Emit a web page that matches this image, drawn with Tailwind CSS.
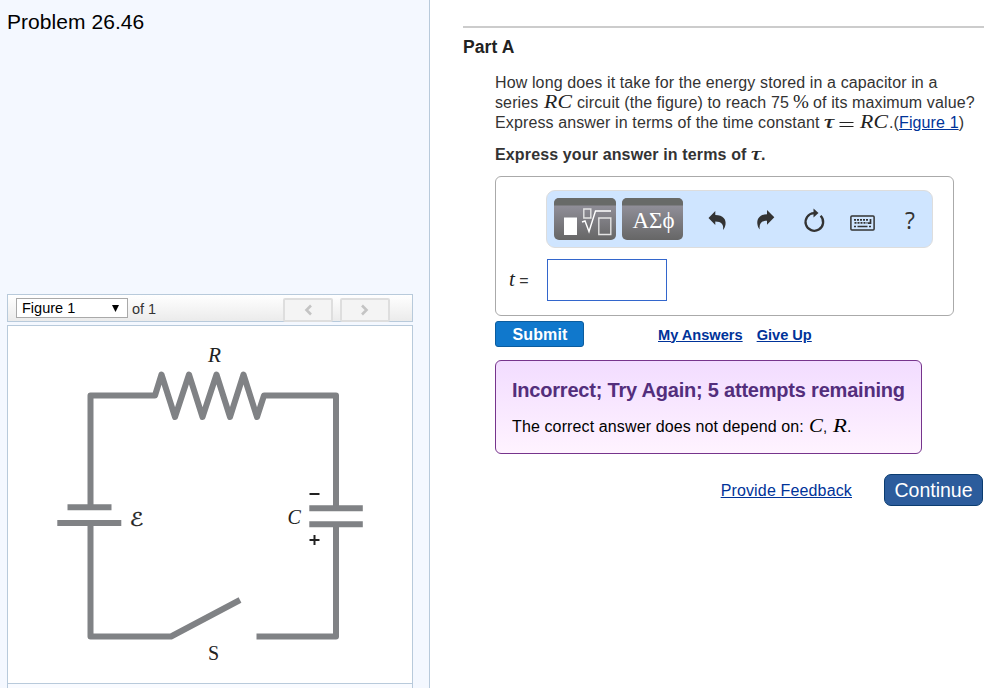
<!DOCTYPE html>
<html lang="en">
<head>
<meta charset="utf-8">
<title>Problem 26.46</title>
<script src="https://cdn.jsdelivr.net/npm/@tailwindcss/browser@4"></script>
</head>
<body class="bg-white font-['Liberation_Sans',Arial,sans-serif] text-[#333]">
<div class="flex h-[688px] w-[996px] overflow-hidden">
  <aside class="flex w-[430px] shrink-0 flex-col border-r border-[#b8cadb] bg-[#f4f8ff] pl-[7px] pr-4">
    <h1 class="h-[294px] shrink-0 pt-2 text-[21px] leading-7 tracking-[0.05px] text-black">Problem 26.46</h1>
    <div class="flex h-7 shrink-0 items-start border border-[#b8cadb] bg-linear-to-b from-white to-[#ebebeb] pl-2 pt-[3px]">
      <div class="flex h-5 w-28 items-center justify-between border border-[#a9a9a9] bg-white pl-[5px] pr-2 text-[14.5px] text-black">
        <span class="pt-0.5">Figure 1</span>
        <svg class="h-[7px] w-[7px]" viewBox="0 0 7 7"><path d="M0 0h7L3.5 7z"/></svg>
      </div>
      <span class="ml-1 text-[14.5px] leading-[23px]">of 1</span>
      <div class="ml-auto mr-[22px] flex gap-[7px]">
        <button class="flex h-6 w-[50px] items-center justify-center rounded-[2px] border-2 border-[#dedede] bg-[#f4f4f4]"><svg class="h-3 w-2" viewBox="0 0 8 12" fill="none" stroke="#c4c4c4" stroke-width="2.600"><path d="M7 1.500 2.500 6 7 10.500"/></svg></button>
        <button class="flex h-6 w-[50px] items-center justify-center rounded-[2px] border-2 border-[#dedede] bg-[#f4f4f4]"><svg class="h-3 w-2" viewBox="0 0 8 12" fill="none" stroke="#c4c4c4" stroke-width="2.600"><path d="M1 1.500 5.500 6 1 10.500"/></svg></button>
      </div>
    </div>
    <div class="mt-[3px] h-[359px] shrink-0 border border-[#b8cadb] bg-white">
      <svg class="h-[357px] w-[404px]" viewBox="8 326 404 357" fill="none" stroke="#808285" stroke-width="6">
        <path stroke-linejoin="round" d="M90.500 507V395.500H155L161.500 374.500 175 417 189 374.500 202.500 417 216.500 374.500 230 417 243.500 374.500 257 417 264 395.500H336V507"/>
        <path stroke-linejoin="round" d="M90.500 523V636.500H171L240 600M256.500 636.500H336V525"/>
        <path d="M67.500 507.200h44M57.300 523h64M309.300 508.300h53.500M309.300 524.300h53.500"/>
        <path stroke="#222" stroke-width="2" d="M309.500 494h10M309.500 540h10M314.500 535v10"/>
        <g fill="#222" stroke="none" font-family="'Liberation Serif',serif" font-size="20">
          <text x="208" y="362" font-style="italic" textLength="13" lengthAdjust="spacingAndGlyphs">R</text>
          <text x="287.500" y="524" font-style="italic">C</text>
          <text x="208" y="660">S</text>
          <text x="129.500" y="525.500" font-family="'DejaVu Sans','DejaVu Serif',serif" font-size="19" textLength="14" lengthAdjust="spacingAndGlyphs" stroke="#222" stroke-width=".3">ℰ</text>
        </g>
      </svg>
    </div>
    <div class="-mt-px h-8 shrink-0 border border-[#b8cadb] bg-[#f9fbff]"></div>
  </aside>

  <main class="w-[566px] pl-[33px] pt-[26px]">
    <section class="w-[521px] border-t-2 border-[#ccc]">
      <h2 class="pt-[9px] text-[17.500px] font-bold leading-5 tracking-[0.1px] text-[#222]">Part A</h2>
      <div class="ml-8 pt-[16px]">
        <div class="text-[16px] leading-5 tracking-[0.12px] whitespace-nowrap">
          <div class="h-5">How long does it take for the energy stored in a capacitor in a</div>
          <div class="flex h-5"><span class="w-[49px]">series</span><svg class="h-5 w-[33px] overflow-visible"><text x="0" y="15" textLength="28" lengthAdjust="spacingAndGlyphs" fill="#222" font-family="Liberation Serif" font-size="19" font-style="italic">RC</text></svg><span class="w-[216px]">circuit (the figure) to reach 75</span><svg class="h-5 w-[20px] overflow-visible"><text x="0" y="15" textLength="16" lengthAdjust="spacingAndGlyphs" fill="#222" font-family="Liberation Serif" font-size="19">%</text></svg><span>of its maximum value?</span></div>
          <div class="flex h-5"><span class="w-[329px]">Express answer in terms of the time constant</span><svg class="h-5 w-[65px] overflow-visible" fill="#222" font-family="Liberation Serif" font-size="19" font-style="italic"><text x="0" y="15" textLength="10" lengthAdjust="spacingAndGlyphs" stroke="#222" stroke-width=".2">τ</text><path d="M15.500 9.500h14M15.500 13.500h14" stroke="#222"/><text x="36" y="15" textLength="28" lengthAdjust="spacingAndGlyphs">RC</text></svg><span>.(<a class="text-[#039] underline">Figure 1</a>)</span></div>
        </div>
        <div class="mt-3 flex h-5 text-[16px] font-bold leading-5 tracking-[0.14px]"><span class="w-[256px]">Express your answer in terms of</span><svg class="h-5 w-[10px] overflow-visible"><text x="0" y="15" textLength="10" lengthAdjust="spacingAndGlyphs" fill="#222" stroke="#222" stroke-width=".2" font-family="Liberation Serif" font-size="19" font-style="italic" font-weight="400">τ</text></svg><span>.</span></div>

        <div class="mt-[11px] h-[140px] w-[459px] rounded-[6px] border border-[#aaa] pl-[50px] pt-[13px]">
          <div class="flex h-[58px] w-[387px] items-start rounded-[9px] border border-[#ddd] bg-[#cfe5ff] pl-[7px] pt-[7px]">
            <svg class="h-[42px] w-[62px] shrink-0 rounded-[5px] bg-linear-to-b from-[#9a98a4] to-[#666]" viewBox="0 0 62 42" fill="none" stroke="#fff" stroke-width="1.400"><path fill="#686a68" stroke="none" d="M0 0h62v7.500H0z"/><path fill="#fff" stroke="none" d="M10 19.500h13v17.500H10z"/><path stroke="#e4e4e4" d="M29.800 11h7v9h-7zM44.800 20h12v16.500h-12z"/><path d="m28 24 3-1 4 10.500 6.500-20.500H57"/></svg>
            <svg class="ml-[6px] h-[42px] w-[61px] shrink-0 rounded-[5px] bg-linear-to-b from-[#9a98a4] to-[#666]" viewBox="0 0 61 42"><path fill="#686a68" d="M0 0h61v7.500H0z"/><text x="10.500" y="30" textLength="42" lengthAdjust="spacingAndGlyphs" fill="#fff" font-family="'Liberation Serif',serif" font-size="23">ΑΣϕ</text></svg>
            <svg class="ml-[25px] mt-[12px] h-[22px] w-[18px] shrink-0 overflow-visible" fill="#333" viewBox="0 0 18 22"><path d="M.5 8 7.300 1v4c8 0 11 4.500 10.200 9.500-.4 2-1 4-2.500 5.500 1-5.500-1.500-8.500-7.700-8.500V15z"/></svg>
            <svg class="ml-[31px] mt-[12px] h-[22px] w-[18px] shrink-0 overflow-visible" fill="#333" viewBox="0 0 18 22"><path d="M17.300 7.200 10 0v4.200C2.500 4.200 0 9 .3 13.500c.3 2.500 1 4.500 2.500 6-1-5.500 1.500-8.800 7.200-8.800v4z"/></svg>
            <svg class="ml-[28px] mt-[10px] h-[26px] w-[22px] shrink-0" viewBox="0 0 22 26" fill="none" stroke="#333" stroke-width="2.300"><path d="M17.600 7.800A8.800 8.800 0 1 1 11 5.200"/><path fill="#333" stroke="none" d="m10.500.5 5 4.500-5 4.500z"/></svg>
            <svg class="ml-[25px] mt-[17px] h-[16px] w-[25px] shrink-0" viewBox="0 0 25 16" fill="none" stroke="#333"><rect x=".9" y="1.100" width="23.200" height="13.800" rx="1" stroke-width="1.500"/><path d="M4 4.800h15M4.500 7.800h13M4 11.500h2M19 11.500h2" stroke-width="1.700" stroke-dasharray="2 1"/><path d="M7.500 11.500h10M20.500 4v4.200H18" stroke-width="1.700"/></svg>
            <span class="ml-[30px] mt-[8px] font-['Open_Sans',sans-serif] text-[23px] leading-[28px]">?</span>
          </div>
          <div class="-ml-[50px] mt-[11px] flex h-[42px] items-center"><span class="w-[51px] pl-[13px] pb-px text-[16px] whitespace-nowrap"><i class="font-['Liberation_Serif',serif] text-[21px] text-[#222]">t</i> =</span><div class="h-[42px] w-[120px] border border-[#36c] bg-white"></div></div>
        </div>

        <div class="mt-[5px] flex h-[26px] items-center">
          <button class="h-[26px] w-[89px] rounded-[3px] border border-[#0b5c9e] bg-[#1078cc] pl-px pt-px text-[16px] font-bold leading-6 tracking-[0.1px] text-white">Submit</button>
          <a class="ml-[74px] mt-[3px] text-[14.600px] font-bold text-[#039] underline">My Answers</a>
          <a class="ml-[14px] mt-[3px] text-[14.600px] font-bold text-[#039] underline">Give Up</a>
        </div>

        <div class="mt-[13px] h-[94px] w-[427px] whitespace-nowrap rounded-[6px] border border-[#76348c] bg-linear-to-b from-[#f2dcff] to-[#fff3ff] pl-4 pt-[17px]">
          <h3 class="h-6 text-[20px] font-bold leading-6 tracking-[-0.21px] text-[#532e7c]">Incorrect; Try Again; 5 attempts remaining</h3>
          <div class="mt-[15px] flex h-5 text-[16px] leading-5 tracking-[0.12px] text-black"><span class="w-[296px]">The correct answer does not depend on:</span><svg class="h-5 w-[39px] overflow-visible" font-family="Liberation Serif" font-size="19" font-style="italic"><text x="1" y="15" textLength="14" lengthAdjust="spacingAndGlyphs">C</text><text x="15" y="15" font-family="Liberation Sans" font-size="15" font-style="normal">,</text><text x="25" y="15" textLength="14" lengthAdjust="spacingAndGlyphs">R</text></svg><span>.</span></div>
        </div>

        <div class="mt-5 flex h-8 w-[488px] items-center justify-end">
          <a class="mr-8 pt-0.5 text-[16px] tracking-[0.15px] text-[#039] underline">Provide Feedback</a>
          <button class="h-8 w-[99px] rounded-[7px] border border-[#0b3c70] bg-[#2c5c9c] text-[19.500px] leading-[30px] text-white">Continue</button>
        </div>
      </div>
    </section>
  </main>
</div>
</body>
</html>
